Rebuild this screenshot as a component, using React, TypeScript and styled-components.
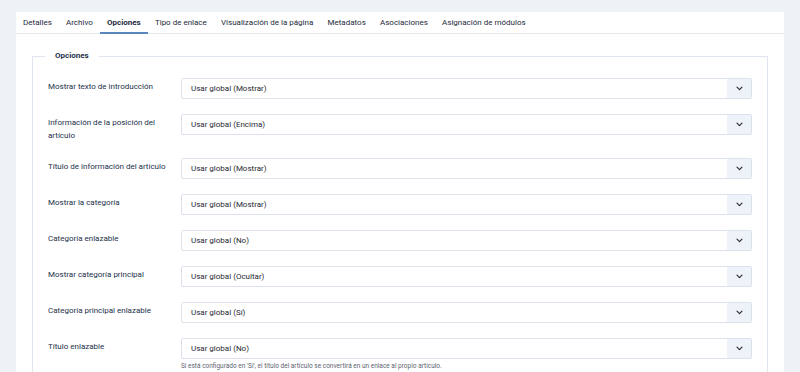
import styled, { createGlobalStyle } from "styled-components";

type Option = {
  label: string;
  value: string;
  help?: string;
};

const tabs = [
  "Detalles",
  "Archivo",
  "Opciones",
  "Tipo de enlace",
  "Visualización de la página",
  "Metadatos",
  "Asociaciones",
  "Asignación de módulos",
];

const options: Option[] = [
  { label: "Mostrar texto de introducción", value: "Usar global (Mostrar)" },
  { label: "Información de la posición del artículo", value: "Usar global (Encima)" },
  { label: "Título de información del artículo", value: "Usar global (Mostrar)" },
  { label: "Mostrar la categoría", value: "Usar global (Mostrar)" },
  { label: "Categoría enlazable", value: "Usar global (No)" },
  { label: "Mostrar categoría principal", value: "Usar global (Ocultar)" },
  { label: "Categoría principal enlazable", value: "Usar global (Sí)" },
  {
    label: "Título enlazable",
    value: "Usar global (No)",
    help: "Si está configurado en 'Sí', el título del artículo se convertirá en un enlace al propio artículo.",
  },
];

const GlobalStyle = createGlobalStyle`
  html, body {
    margin: 0;
    height: 100%;
    overflow: hidden;
    background: #eef2f6;
  }

  body {
    font-family: Roboto, "Noto Sans", "Liberation Sans", sans-serif;
    color: #22304a;
  }
`;

const Chevron = () => (
  <svg width="7" height="5" viewBox="0 0 7 5" fill="none">
    <path d="M1 1.2l2.5 2.5 2.5-2.5" stroke="#2a2f38" strokeWidth="1.2" strokeLinecap="round" strokeLinejoin="round" />
  </svg>
);

const App: React.FC = () => {
  return (
    <>
      <GlobalStyle />
      <StyledPage>
        <Card>
          <TabBar>
            {tabs.map((tab) => (
              <Tab key={tab} $active={tab === "Opciones"}>
                {tab}
              </Tab>
            ))}
          </TabBar>
          <CardBody>
            <Fieldset>
              <Legend>Opciones</Legend>
              {options.map((opt) => (
                <Row key={opt.label}>
                  <Label>{opt.label}</Label>
                  <Control>
                    <Select>
                      <span className="value">{opt.value}</span>
                      <span className="caret">
                        <Chevron />
                      </span>
                    </Select>
                    {opt.help && <Help>{opt.help}</Help>}
                  </Control>
                </Row>
              ))}
            </Fieldset>
          </CardBody>
        </Card>
      </StyledPage>
    </>
  );
};

const StyledPage = styled.div`
  padding: 12px 16px 0;
`;

const Card = styled.div`
  background: #ffffff;
`;

const TabBar = styled.div`
  display: flex;
  height: 21px;
  border-bottom: 1px solid #e3e8ef;
`;

const Tab = styled.div<{ $active: boolean }>`
  display: flex;
  align-items: center;
  padding: 0 7.1px;
  font-size: 8px;
  font-weight: ${(p) => (p.$active ? 700 : 400)};
  color: #1d2a3c;
  border-bottom: 2px solid ${(p) => (p.$active ? "#5a86c0" : "transparent")};
  margin-bottom: -1px;
  white-space: nowrap;
`;

const CardBody = styled.div`
  padding: 16px 16px 0;
`;

const Fieldset = styled.fieldset`
  margin: 0;
  padding: 16px 15px 0;
  border: 1px solid #dfe5ee;
  min-width: 0;
`;

const Legend = styled.legend`
  margin-left: -3px;
  padding: 0 10px;
  font-size: 8px;
  line-height: 12px;
  font-weight: 700;
  color: #22304a;
`;

const Row = styled.div`
  display: grid;
  grid-template-columns: 133px 1fr;
  margin-bottom: 15px;
`;

const Label = styled.div`
  padding: 2px 14px 1px 0;
  font-size: 8px;
  line-height: 13px;
  color: #22304a;
`;

const Control = styled.div`
  display: flex;
  flex-direction: column;
`;

const Select = styled.div`
  display: flex;
  align-items: stretch;
  height: 21px;
  box-sizing: border-box;
  border: 1px solid #dbe2ec;
  border-radius: 2px;
  background: #ffffff;

  .value {
    flex: 1;
    display: flex;
    align-items: center;
    padding-left: 9px;
    font-size: 8px;
    color: #1f2733;
  }

  .caret {
    width: 24px;
    display: flex;
    align-items: center;
    justify-content: center;
    background: #eef2f9;
  }
`;

const Help = styled.div`
  margin-top: 3px;
  font-size: 6.5px;
  line-height: 9px;
  color: #5d6470;
`;

export default App;
